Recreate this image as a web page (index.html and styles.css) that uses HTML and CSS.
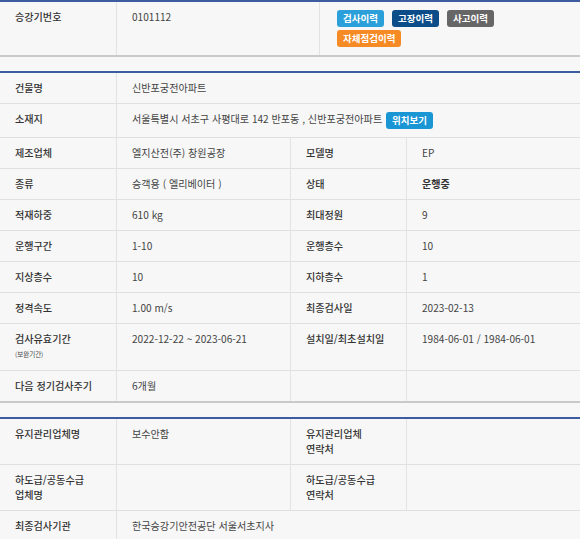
FILE: index.html
```html
<!DOCTYPE html>
<html lang="ko">
<head>
<meta charset="utf-8">
<link rel="stylesheet" href="styles.css">
</head>
<body>
<div class="page">
  <section class="sheet sheet-top">
    <div class="cell key first last">승강기번호</div>
    <div class="cell last">0101112</div>
    <div class="cell last btn-cell">
      <div class="btns">
        <span class="btn b-insp">검사이력</span>
        <span class="btn b-fail">고장이력</span>
        <span class="btn b-acc">사고이력</span>
        <span class="btn b-self">자체점검이력</span>
      </div>
    </div>
  </section>

  <section class="sheet sheet-4">
    <div class="cell key first">건물명</div>
    <div class="cell span3">신반포궁전아파트</div>

    <div class="cell key first">소재지</div>
    <div class="cell span3">서울특별시 서초구 사평대로 142 반포동 , 신반포궁전아파트 <span class="btn b-map">위치보기</span></div>

    <div class="cell key first">제조업체</div>
    <div class="cell">엘지산전(주) 창원공장</div>
    <div class="cell key">모델명</div>
    <div class="cell">EP</div>

    <div class="cell key first">종류</div>
    <div class="cell">승객용 ( 엘리베이터 )</div>
    <div class="cell key">상태</div>
    <div class="cell strong">운행중</div>

    <div class="cell key first">적재하중</div>
    <div class="cell">610 kg</div>
    <div class="cell key">최대정원</div>
    <div class="cell">9</div>

    <div class="cell key first">운행구간</div>
    <div class="cell">1-10</div>
    <div class="cell key">운행층수</div>
    <div class="cell">10</div>

    <div class="cell key first">지상층수</div>
    <div class="cell">10</div>
    <div class="cell key">지하층수</div>
    <div class="cell">1</div>

    <div class="cell key first">정격속도</div>
    <div class="cell">1.00 m/s</div>
    <div class="cell key">최종검사일</div>
    <div class="cell">2023-02-13</div>

    <div class="cell key first">검사유효기간<span class="sub">(보완기간)</span></div>
    <div class="cell">2022-12-22 ~ 2023-06-21</div>
    <div class="cell key">설치일/최초설치일</div>
    <div class="cell">1984-06-01 / 1984-06-01</div>

    <div class="cell key first last">다음 정기검사주기</div>
    <div class="cell last">6개월</div>
    <div class="cell key last"></div>
    <div class="cell last"></div>
  </section>

  <section class="sheet sheet-4 sheet-loose">
    <div class="cell key first">유지관리업체명</div>
    <div class="cell">보수안함</div>
    <div class="cell key">유지관리업체<br>연락처</div>
    <div class="cell"></div>

    <div class="cell key first">하도급/공동수급<br>업체명</div>
    <div class="cell"></div>
    <div class="cell key">하도급/공동수급<br>연락처</div>
    <div class="cell"></div>

    <div class="cell key first last">최종검사기관</div>
    <div class="cell span3 last">한국승강기안전공단 서울서초지사</div>
  </section>
</div>
</body>
</html>
```

FILE: styles.css
```css
html, body {
  margin: 0;
  padding: 0;
  background: #f7f7f7;
}
body {
  font-family: "Noto Sans CJK KR", "Noto Sans", sans-serif;
  font-size: 10.1px;
  color: #444;
}
.page {
  width: 580px;
  display: flex;
  flex-direction: column;
  gap: 14px;
}
.sheet {
  display: grid;
  border-top: 2px solid #3d5c9f;
  border-bottom: 2px solid #c9c9c9;
}
.sheet-top {
  grid-template-columns: 116px 203px 261px;
}
.sheet-4 {
  grid-template-columns: 116px 174px 116px 174px;
}
.cell {
  box-sizing: border-box;
  padding: 8px 15px;
  line-height: 14px;
  border-bottom: 1px solid #e0e0e0;
  border-left: 1px solid #e3e3e3;
  color: #444;
  min-width: 0;
}
.sheet-loose .cell {
  line-height: 14.5px;
}
.cell.first {
  border-left: none;
}
.cell.last {
  border-bottom: none;
}
.cell.span3 {
  grid-column: span 3;
}
.cell.key {
  font-weight: 500;
  color: #333;
}
.cell.strong {
  font-weight: 700;
  color: #333;
}
.sheet-top .btn-cell {
  padding-left: 17px;
}
.btns {
  display: flex;
  flex-wrap: wrap;
  gap: 3px 8px;
  width: 172px;
}
.btn {
  display: inline-block;
  height: 17px;
  line-height: 17px;
  padding: 0 6px;
  border-radius: 3px;
  color: #fff;
  font-weight: 700;
  font-size: 9.5px;
}
.b-insp { background: #2a9fd9; }
.b-fail { background: #0c4d89; }
.b-acc { background: #666; }
.b-self { background: #f68a24; }
.b-map {
  background: #1a96d5;
  margin-left: 1px;
  vertical-align: middle;
}
.sub {
  display: block;
  font-size: 6.5px;
  line-height: 16px;
  font-weight: 400;
  color: #444;
}
```
